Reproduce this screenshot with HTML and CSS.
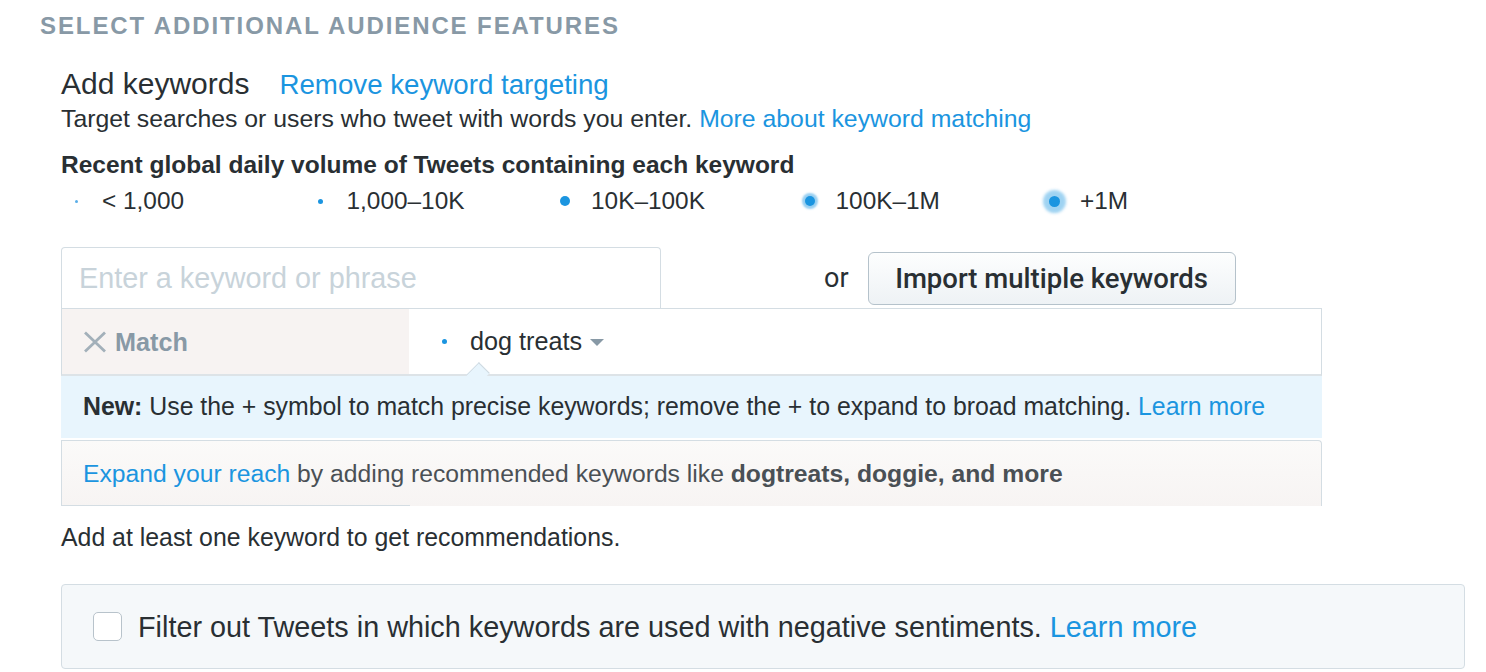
FILE: index.html
```html
<!DOCTYPE html>
<html>
<head>
<meta charset="utf-8">
<link rel="stylesheet" href="styles.css">
</head>
<body>
<div class="page">
  <h2 class="section-title">SELECT ADDITIONAL AUDIENCE FEATURES</h2>
  <div class="content">
    <div class="title-row">
      <span class="title">Add keywords</span>
      <a class="link title-link">Remove keyword targeting</a>
    </div>
    <p class="desc">Target searches or users who tweet with words you enter. <a class="link">More about keyword matching</a></p>
    <p class="vol-title">Recent global daily volume of Tweets containing each keyword</p>
    <div class="legend">
      <div class="legend-item"><span class="dot-slot"><span class="dot d1"></span></span>&lt; 1,000</div>
      <div class="legend-item"><span class="dot-slot"><span class="dot d2"></span></span>1,000–10K</div>
      <div class="legend-item"><span class="dot-slot"><span class="dot d3"></span></span>10K–100K</div>
      <div class="legend-item"><span class="dot-slot"><span class="dot d4"></span></span>100K–1M</div>
      <div class="legend-item"><span class="dot-slot"><span class="dot d5"></span></span>+1M</div>
    </div>

    <div class="input-row">
      <div class="kw-input">Enter a keyword or phrase</div>
      <span class="or">or</span>
      <button class="import-btn">Import multiple keywords</button>
    </div>

    <div class="kw-table">
      <div class="match-row">
        <div class="match-col">
          <svg class="x-icon" width="24" height="22" viewBox="0 0 24 22"><path d="M2 1.5 L22 20.5 M22 1.5 L2 20.5" stroke="#a3b0ba" stroke-width="2.8" fill="none"/></svg>
          <span class="match-label">Match</span>
        </div>
        <div class="kw-col">
          <span class="dot-slot small"><span class="dot d2"></span></span>
          <span class="kw-text">dog treats</span>
          <span class="caret"></span>
        </div>
      </div>
      <div class="info-row">
        <span class="pointer"></span>
        <b>New:</b> Use the + symbol to match precise keywords; remove the + to expand to broad matching. <a class="link">Learn more</a>
      </div>
      <div class="expand-row">
        <a class="link">Expand your reach</a> by adding recommended keywords like <b>dogtreats, doggie, and more</b>
      </div>
    </div>

    <p class="hint">Add at least one keyword to get recommendations.</p>

    <label class="filter-box">
      <span class="checkbox"></span>
      <span class="filter-text">Filter out Tweets in which keywords are used with negative sentiments. <a class="link">Learn more</a></span>
    </label>
  </div>
</div>
</body>
</html>
```

FILE: styles.css
```css
* { box-sizing: border-box; }
html, body { margin: 0; padding: 0; background: #fff; }
body {
  font-family: "Liberation Sans", Arial, sans-serif;
  color: #292f33;
  width: 1486px;
  height: 672px;
  overflow: hidden;
}
.page { padding: 12px 0 0 40px; }
.section-title {
  margin: 0;
  font-size: 24px;
  line-height: 28px;
  font-weight: bold;
  letter-spacing: 1.9px;
  color: #8899a6;
}
.content { padding-left: 21px; }
.link { color: #1b95e0; text-decoration: none; cursor: pointer; }

.title-row { margin-top: 27px; display: flex; align-items: baseline; height: 34px; }
.title { font-size: 30px; line-height: 34px; color: #292f33; }
.title-link { font-size: 27.7px; line-height: 34px; margin-left: 30px; }

.desc { margin: 3px 0 0; font-size: 24.8px; line-height: 30px; }
.vol-title { margin: 16.5px 0 0; font-size: 24.5px; line-height: 28px; font-weight: bold; }

.legend { display: flex; margin-top: 7.5px; height: 30px; align-items: center; }
.legend-item { width: 244.5px; display: flex; align-items: center; font-size: 24.4px; }
.dot-slot { width: 30px; display: inline-flex; justify-content: center; align-items: center; margin-right: 11px; }
.dot { display: inline-block; border-radius: 50%; background: #1b95e0; }
.d1 { width: 3px; height: 3px; background: #5aaee8; }
.d2 { width: 5px; height: 5px; }
.d3 { width: 10px; height: 10px; }
.d4 { width: 10px; height: 10px; box-shadow: 0 0 2px 3px rgba(27,149,224,0.45); }
.d5 { width: 11px; height: 11px; box-shadow: 0 0 3px 6px rgba(27,149,224,0.42); }

.input-row { display: flex; align-items: flex-start; margin-top: 31px; }
.kw-input {
  width: 600px; height: 61px;
  border: 1px solid #d4dde3; border-bottom: none;
  border-radius: 4px 4px 0 0;
  padding: 0 0 0 17px;
  display: flex; align-items: center;
  font-size: 28.8px; color: #c8d3da;
}
.or {
  margin-left: 163px; margin-top: 16px;
  font-family: Roboto, sans-serif; font-size: 27px; line-height: 30px;
}
.import-btn {
  margin-left: 19px; margin-top: 5px;
  width: 368px; height: 53px;
  border: 1px solid #b5c2cb; border-radius: 6px;
  background: linear-gradient(#fdfefe, #eef2f5);
  font-family: Roboto, sans-serif; font-weight: 500;
  font-size: 27.5px; color: #292f33;
  padding: 0;
}

.kw-table { width: 1261px; }
.match-row {
  display: flex; height: 68px;
  border: 1px solid #d4dde3;
  border-bottom: 2px solid #dde3e7;
}
.match-col {
  width: 347px; background: #f7f3f2;
  display: flex; align-items: center; padding-left: 21px; padding-top: 1px;
}
.x-icon { margin-right: 8px; }
.match-label { font-size: 25.2px; font-weight: bold; color: #8899a6; }
.kw-col { display: flex; align-items: center; padding-left: 20px; font-size: 25.2px; }
.dot-slot.small { width: 30px; margin-right: 0; }
.kw-text { margin-left: 11px; }
.caret {
  margin-left: 8px; margin-top: 2px;
  width: 0; height: 0;
  border-left: 7px solid transparent; border-right: 7px solid transparent;
  border-top: 7px solid #8899a6;
}

.info-row {
  position: relative;
  height: 62px; background: #e8f5fd;
  display: flex; align-items: center; padding-left: 22px;
  font-size: 24.85px; white-space: pre;
}
.pointer {
  position: absolute; left: 408px; top: -11px;
  width: 18px; height: 18px;
  background: #e8f5fd;
  border-left: 1px solid #cfd9e0; border-top: 1px solid #cfd9e0;
  transform: rotate(45deg) scaleX(0.85);
}
.expand-row {
  height: 66px;
  margin-top: 2px;
  border: 1px solid #d4dde3; border-bottom: none;
  border-radius: 0 4px 0 0;
  background: linear-gradient(#d4dde3, #d4dde3) left bottom / 348px 1px no-repeat, linear-gradient(#fbfaf9, #f7f4f3);
  display: flex; align-items: center; padding-left: 21px;
  font-size: 24.7px; color: #4a5055; white-space: pre;
}
.expand-row b { color: #4a5055; }

.hint { margin: 16.5px 0 0; font-size: 24.85px; line-height: 30px; }

.filter-box {
  margin-top: 31px;
  width: 1404px; height: 85px;
  border: 1px solid #d4dde3; border-radius: 4px;
  background: #f5f8fa;
  display: flex; align-items: center; padding-left: 31px;
}
.checkbox {
  width: 29px; height: 29px; flex: none;
  border: 1px solid #b8c3cb; border-radius: 5px; background: #fff;
  margin-right: 16px;
}
.filter-text { font-size: 28.8px; padding-top: 2px; }
```
